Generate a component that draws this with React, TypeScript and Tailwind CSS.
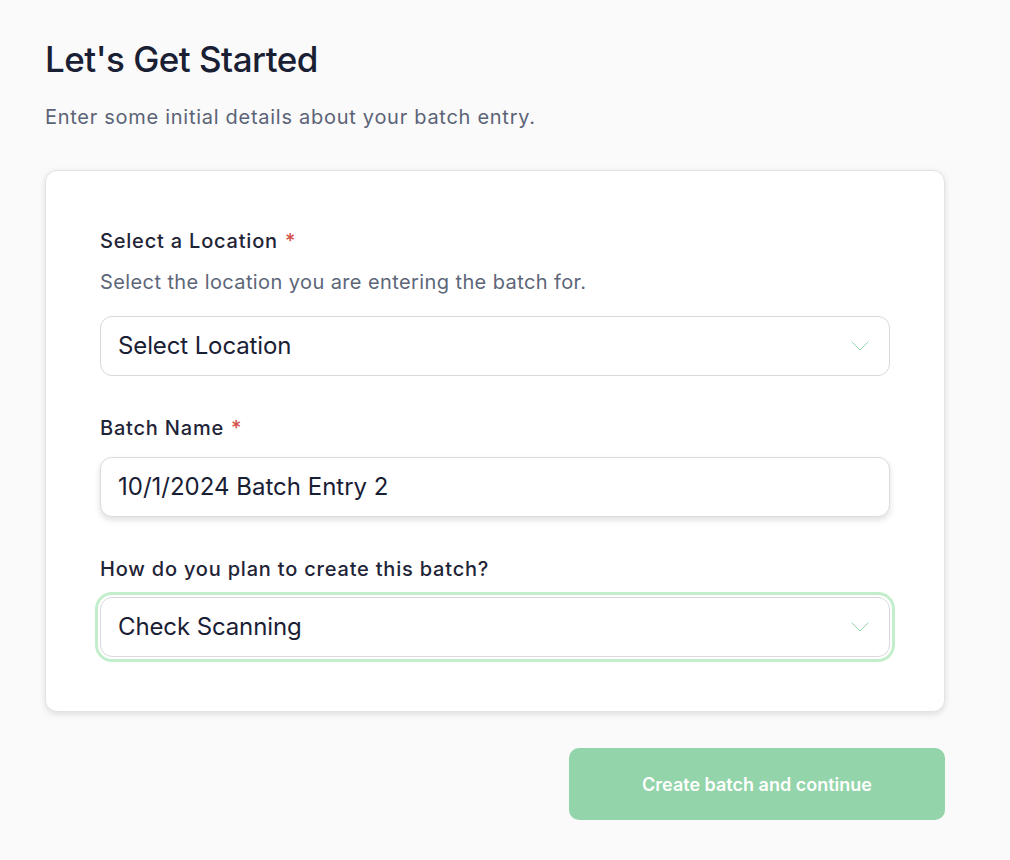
import React from 'react';

function Chevron() {
  return (
    <svg width="18" height="10" viewBox="0 0 18 10" fill="none" className="shrink-0">
      <path d="M1 1l8 8 8-8" stroke="#93d6a9" strokeWidth="1" strokeLinecap="round" strokeLinejoin="round" />
    </svg>
  );
}

function Label({ text, required }: { text: string; required?: boolean }) {
  return (
    <label className="block text-[20px] font-medium leading-6 tracking-[0.04em] text-[#1f2437]">
      {text}
      {required && <span className="ml-[7px] text-[#d3504a]">*</span>}
    </label>
  );
}

export default function App() {
  return (
    <div
      className="min-h-screen w-full bg-[#fafafa] pl-[45px] pr-[65px] pt-[38px] pb-10"
      style={{ fontFamily: 'Inter, "Noto Sans", sans-serif' }}
    >
      <h1 className="text-[35px] font-medium leading-[42px] tracking-[-0.015em] text-[#1a2034]">Let's Get Started</h1>
      <p className="mt-[25px] text-[20px] leading-6 tracking-[0.036em] text-[#5a6377]">
        Enter some initial details about your batch entry.
      </p>

      {/* Form card */}
      <div className="mt-[41px] w-[900px] rounded-xl border border-[#e3e3e6] bg-white px-[54px] pt-[58px] pb-[54px] shadow-[0_2px_6px_rgba(0,0,0,0.12)]">
        <Label text="Select a Location" required />
        <p className="mt-[17px] text-[20px] leading-6 tracking-[0.02em] text-[#5d6679]">
          Select the location you are entering the batch for.
        </p>
        <button className="mt-[22px] flex h-[60px] w-full items-center justify-between rounded-xl border border-[#d9d9dc] bg-white pl-[17px] pr-[20px] text-left">
          <span className="text-[24px] tracking-[-0.005em] text-[#1a2034]">Select Location</span>
          <Chevron />
        </button>

        <div className="mt-[40px]">
          <Label text="Batch Name" required />
        </div>
        <div className="mt-[17px] flex h-[60px] w-full items-center rounded-xl border border-[#dcdcdf] bg-white pl-[17px] shadow-[0_3px_6px_rgba(0,0,0,0.13)]">
          <span className="text-[24px] text-[#1a2034]">10/1/2024 Batch Entry 2</span>
        </div>

        <div className="mt-[40px]">
          <Label text="How do you plan to create this batch?" />
        </div>
        <button className="mt-[16px] flex h-[60px] w-full items-center justify-between rounded-xl border border-[#d9d9dc] bg-white pl-[17px] pr-[20px] text-left shadow-[0_0_0_2px_#ffffff,0_0_0_5px_#c2eecb]">
          <span className="text-[24px] tracking-[-0.005em] text-[#1a2034]">Check Scanning</span>
          <Chevron />
        </button>
      </div>

      <div className="mt-[36px] flex w-[900px] justify-end">
        <button className="h-[72px] w-[376px] rounded-[10px] bg-[#93d4aa] text-[18px] font-semibold text-white">
          Create batch and continue
        </button>
      </div>
    </div>
  );
}
